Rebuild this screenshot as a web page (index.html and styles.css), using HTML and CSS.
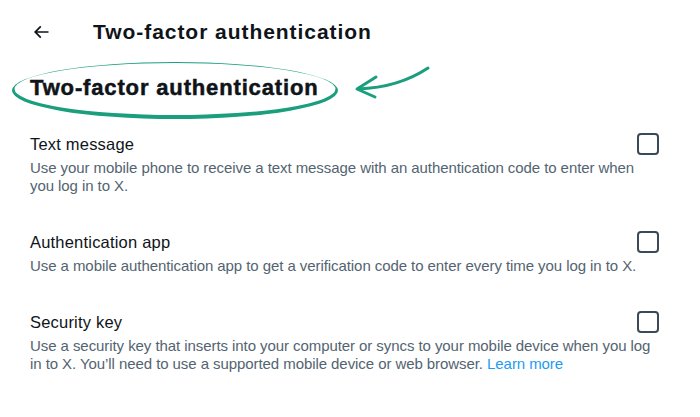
FILE: index.html
```html
<!DOCTYPE html>
<html>
<head>
<meta charset="utf-8">
<link rel="stylesheet" href="styles.css">
</head>
<body>
<div class="page">
  <header class="topbar">
    <svg class="back" viewBox="0 0 24 24" width="20" height="20"><path d="M7.414 13l5.043 5.04-1.414 1.42L3.586 12l7.457-7.46 1.414 1.42L7.414 11H21v2H7.414z" fill="#0f1419"/></svg>
    <h1 class="toptitle">Two-factor authentication</h1>
  </header>
  <div class="hero">
    <h2 class="herotitle">Two-factor authentication</h2>
    <svg class="annot" width="700" height="130" viewBox="0 0 700 130">
      <path fill-rule="evenodd" fill="#1a9e7e" d="M12 90.5 A163 28.5 0 1 0 338 90.5 A163 28.5 0 1 0 12 90.5 Z M14.5 89 A160.5 26 0 1 0 335.5 89 A160.5 26 0 1 0 14.5 89 Z"/>
      <path d="M428 68 C 410 80, 385 88, 358 89" fill="none" stroke="#1a9e7e" stroke-width="3" stroke-linecap="round"/>
      <path d="M376 77 L 357 89 L 375 97" fill="none" stroke="#1a9e7e" stroke-width="3" stroke-linecap="round" stroke-linejoin="round"/>
    </svg>
  </div>
  <section class="opts">
    <div class="opt">
      <div class="optname">Text message</div>
      <span class="box"></span>
      <div class="optdesc">Use your mobile phone to receive a text message with an authentication code to enter when you log in to X.</div>
    </div>
    <div class="opt">
      <div class="optname">Authentication app</div>
      <span class="box"></span>
      <div class="optdesc">Use a mobile authentication app to get a verification code to enter every time you log in to X.</div>
    </div>
    <div class="opt">
      <div class="optname">Security key</div>
      <span class="box"></span>
      <div class="optdesc">Use a security key that inserts into your computer or syncs to your mobile device when you log in to X. You’ll need to use a supported mobile device or web browser. <a class="link" href="#">Learn more</a></div>
    </div>
  </section>
</div>
</body>
</html>
```
FILE: styles.css
```css
* { box-sizing: border-box; }
html, body { margin: 0; padding: 0; background: #fff; }
body { font-family: "Liberation Sans", Arial, sans-serif; color: #0f1419; }
.page { width: 700px; height: 417px; overflow: hidden; }
.topbar { display: flex; align-items: center; height: 64px; padding-left: 31px; }
.back { flex: none; }
.toptitle { margin: 0 0 0 42px; font-size: 21px; font-weight: 700; letter-spacing: 0.95px; }
.hero { position: relative; height: 64px; }
.herotitle { margin: 0; padding: 10px 0 0 30px; font-size: 22px; line-height: 28px; font-weight: 900; letter-spacing: 0.85px; -webkit-text-stroke: 0.5px #0f1419; }
.annot { position: absolute; left: 0; top: -64px; pointer-events: none; }
.opts { display: flex; flex-direction: column; gap: 36px; padding: 5px 41px 0 30px; }
.opt { display: grid; grid-template-columns: 1fr auto; align-items: start; }
.optname { font-size: 16.5px; line-height: 22px; color: #0f1419; letter-spacing: 0.2px; }
.optdesc { grid-column: 1 / -1; font-size: 15px; line-height: 18px; color: #536471; margin-top: 4px; letter-spacing: -0.07px; }
.link { color: #1d9bf0; text-decoration: none; }
.box { width: 22px; height: 22px; border: 2px solid #3b4a56; border-radius: 4px; }
```
